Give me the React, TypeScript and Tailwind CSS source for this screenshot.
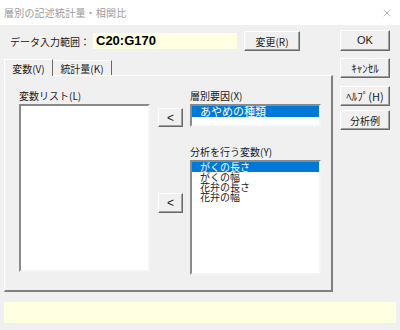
import { X } from "lucide-react";

const raised =
  "bg-[#f0f0f0] border border-t-white border-l-white border-r-[#696969] border-b-[#696969] shadow-[inset_-1px_-1px_0_#a0a0a0] flex items-center justify-center whitespace-nowrap";
const sunken =
  "bg-white border-2 border-t-[#8a8a8a] border-l-[#8a8a8a] border-r-[#f4f4f4] border-b-[#f4f4f4]";

const yVars = ["がくの長さ", "がくの幅", "花弁の長さ", "花弁の幅"];

function ListItem({ text, selected }: { text: string; selected?: boolean }) {
  return (
    <div
      className={`h-[10px] leading-[10px] pl-[8px] whitespace-nowrap ${
        selected ? "bg-[#0078d7] text-white" : "text-[#1a1a1a]"
      }`}
    >
      {text}
    </div>
  );
}

export default function App() {
  return (
    <div className="w-[400px] h-[330px] bg-[#f0f0f0] flex flex-col overflow-hidden text-[10px] text-[#1a1a1a] font-['Noto_Sans_CJK_JP',sans-serif]">
      {/* Title bar */}
      <div className="h-[25px] shrink-0 bg-white flex items-center justify-between pl-[4px] pr-[7px]">
        <span className="text-[10px] text-[#9a9a9a] whitespace-nowrap tracking-[0.2px]">層別の記述統計量・相関比</span>
        <X className="w-[12px] h-[12px] text-[#8a8a8a]" strokeWidth={1.2} />
      </div>

      <div className="flex">
        {/* Left column */}
        <div className="ml-[4px] w-[329px] flex flex-col">
          <div className="mt-[6px] h-[20px] flex items-center">
            <span className="w-[89px] pl-[6px] text-[10px] whitespace-nowrap">データ入力範囲：</span>
            <div className="w-[144px] h-[16px] bg-[#ffffe1] flex items-center pl-[3px] text-[13px] font-bold font-['Liberation_Sans',sans-serif] text-black">
              C20:G170
            </div>
            <button className={`${raised} ml-[7px] w-[56px] h-[20px] text-[10px]`}>変更(R)</button>
          </div>

          {/* Tabs */}
          <div className="mt-[7px] flex items-end h-[17px]">
            <div className="w-[49px] h-[17px] border-l border-t border-white border-r border-r-[#696969] flex items-center justify-center whitespace-nowrap bg-[#f0f0f0] relative z-10 -mb-px">
              変数(V)
            </div>
            <div className="w-[59px] h-[15px] border-t border-white border-r border-r-[#696969] flex items-center justify-center whitespace-nowrap">
              統計量(K)
            </div>
          </div>

          {/* Panel */}
          <div className="h-[217px] w-[329px] border-t border-l border-white border-r-2 border-b-2 border-r-[#808080] border-b-[#808080] flex">
            {/* Column 1 */}
            <div className="ml-[14px] pt-[13px] flex flex-col">
              <div className="h-[14px] leading-[14px] whitespace-nowrap">変数リスト(L)</div>
              <div className={`${sunken} mt-[1px] w-[131px] h-[168px]`} />
            </div>

            {/* Column 2 */}
            <div className="ml-[8px] pt-[32px] flex flex-col w-[25px]">
              <button className={`${raised} h-[19px] w-[25px] text-[12px] font-['Liberation_Sans',sans-serif]`}>
                &lt;
              </button>
              <button className={`${raised} mt-[66px] h-[20px] w-[25px] text-[12px] font-['Liberation_Sans',sans-serif]`}>
                &lt;
              </button>
            </div>

            {/* Column 3 */}
            <div className="ml-[7px] pt-[13px] flex flex-col w-[131px]">
              <div className="h-[14px] leading-[14px] whitespace-nowrap">層別要因(X)</div>
              <div className={`${sunken} mt-[1px] h-[23px] text-[11px]`}>
                <div className="h-[11px] leading-[11px] pl-[8px] bg-[#0078d7] text-white whitespace-nowrap">
                  あやめの種類
                </div>
              </div>
              <div className="mt-[18px] h-[14px] leading-[14px] whitespace-nowrap">分析を行う変数(Y)</div>
              <div className={`${sunken} mt-[1px] h-[115px] text-[10px]`}>
                {yVars.map((v, i) => (
                  <ListItem key={v} text={v} selected={i === 0} />
                ))}
              </div>
            </div>
          </div>
        </div>

        {/* Right column buttons */}
        <div className="ml-[7px] w-[50px] pt-[5px] flex flex-col">
          <button className={`${raised} h-[21px] text-[11px] font-['Liberation_Sans',sans-serif]`}>OK</button>
          <button className={`${raised} mt-[7px] h-[20px] text-[11px]`}>ｷｬﾝｾﾙ</button>
          <button className={`${raised} mt-[8px] h-[20px] text-[11px]`}>ﾍﾙﾌﾟ(H)</button>
          <button className={`${raised} mt-[4px] h-[20px] text-[10px]`}>分析例</button>
        </div>
      </div>

      {/* Status bar */}
      <div className="mx-[4px] mt-[10px] h-[21px] w-[392px] bg-[#ffffe1]" />
    </div>
  );
}
